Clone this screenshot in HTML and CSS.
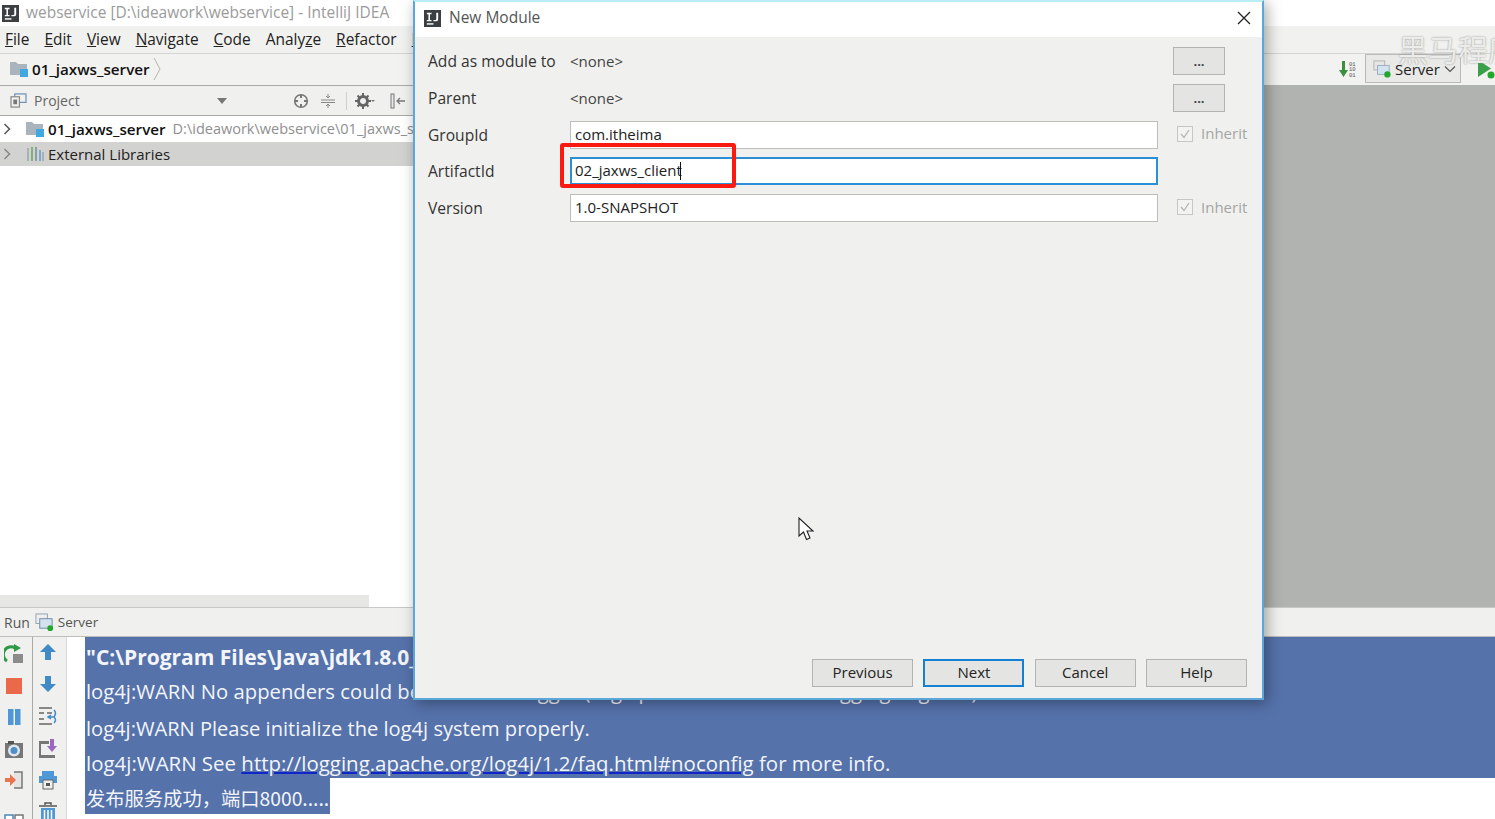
FILE: index.html
```html
<!DOCTYPE html>
<html lang="en">
<head>
<meta charset="utf-8">
<title>New Module</title>
<link rel="stylesheet" href="styles.css">
</head>
<body>
<div class="ide">
  <header class="titlebar">
    <svg class="ij-logo" viewBox="0 0 18 18"><rect width="18" height="18" fill="#3c3f41"/><rect x="3" y="14" width="7" height="1.5" fill="#fff"/><path d="M3 3h5v1.500H6.300v6H8V12H3v-1.500h1.700v-6H3zM13 3h2v7q0 2-2.500 2H10v-1.500h2q1 0 1-1z" fill="#fff"/></svg>
    <span class="title-text">webservice [D:\ideawork\webservice] - IntelliJ IDEA</span>
  </header>
  <nav class="menubar">
    <span><u>F</u>ile</span><span><u>E</u>dit</span><span><u>V</u>iew</span><span><u>N</u>avigate</span><span><u>C</u>ode</span><span>Analy<u>z</u>e</span><span><u>R</u>efactor</span><span><u>B</u>uild</span>
  </nav>
  <div class="navbar">
    <svg class="folder" viewBox="0 0 18 16"><path d="M0 1h6l2 2h9v11H0z" fill="#a9b4bd"/><rect x="10" y="8" width="8" height="8" fill="#40a8e0"/></svg>
    <span class="crumb">01_jaxws_server</span>
    <svg class="crumb-arrow" viewBox="0 0 8 24"><path d="M1 1l6 11-6 11" fill="none" stroke="#b5b5b5"/></svg>
    <div class="nav-right">
      <svg class="sort-icon" viewBox="0 0 20 18"><path d="M4 1h3v9h3l-4.500 7L1 10h3z" fill="#3c8f3f"/><text x="11" y="5.500" class="bits">01</text><text x="11" y="11" class="bits">10</text><text x="11" y="16.500" class="bits">01</text></svg>
      <div class="run-config">
        <svg class="server-icon" viewBox="0 0 20 20"><rect x="1" y="1" width="12" height="10" fill="#e6e6e6" stroke="#b0b0b0"/><rect x="5" y="6" width="13" height="10" fill="#d3e2f0" stroke="#9ab"/><circle cx="16" cy="16" r="3.500" fill="#1fa82c"/></svg>
        <span>Server</span>
        <svg class="chev" viewBox="0 0 12 8"><path d="M1 1.500l5 5 5-5" fill="none" stroke="#555" stroke-width="1.200"/></svg>
      </div>
      <svg class="run-icon" viewBox="0 0 18 20"><path d="M1 1l13 8.500L1 18z" fill="#3aa04a"/><circle cx="14" cy="16" r="3.500" fill="#1fa82c"/></svg>
    </div>
  </div>
  <main class="workspace">
    <aside class="project">
      <div class="project-head">
        <svg class="proj-icon" viewBox="0 0 18 16"><rect x="5" y="1" width="12" height="9" fill="none" stroke="#6d93b8" stroke-width="1.300"/><rect x="1" y="4" width="9" height="11" fill="#f0f0ef" stroke="#8a8a8a" stroke-width="1.300"/><rect x="3.500" y="7" width="4" height="5" fill="#777"/></svg>
        <span class="proj-label">Project</span>
        <span class="proj-drop"></span>
        <svg class="tool t-target" viewBox="0 0 16 16"><circle cx="8" cy="8" r="6.300" fill="none" stroke="#777" stroke-width="1.600"/><path d="M8 2v3M8 11v3M2 8h3M11 8h3" stroke="#777" stroke-width="2"/></svg>
        <svg class="tool t-collapse" viewBox="0 0 16 16"><path d="M1 7h14M1 9.500h14M8 1v4M6 3l2 2 2-2M8 15v-4M6 13l2-2 2 2" stroke="#888" fill="none"/></svg>
        <span class="tool-sep"></span>
        <svg class="tool t-gear" viewBox="0 0 20 16"><circle cx="8" cy="8" r="4.500" fill="none" stroke="#666" stroke-width="3"/><path d="M8 0v3M8 13v3M0 8h3M13 8h3M2.500 2.500l2 2M11.500 11.500l2 2M13.500 2.500l-2 2M4.500 11.500l-2 2" stroke="#666" stroke-width="2"/><path d="M16 7h4l-2 2z" fill="#777"/></svg>
        <svg class="tool t-hide" viewBox="0 0 16 16"><rect x="1" y="1" width="3" height="14" fill="#e8e8e8" stroke="#777"/><path d="M15 8H7M10 5L7 8l3 3" fill="none" stroke="#777" stroke-width="1.300"/></svg>
      </div>
      <div class="tree">
        <div class="tree-row first">
          <svg class="twist" viewBox="0 0 8 12"><path d="M1.500 1l5 5-5 5" fill="none" stroke="#555" stroke-width="1.500"/></svg>
          <svg class="folder tree-icon" viewBox="0 0 18 16"><path d="M0 1h6l2 2h9v11H0z" fill="#a9b4bd"/><rect x="10" y="8" width="8" height="8" fill="#40a8e0"/></svg>
          <span class="crumb">01_jaxws_server</span>
          <span class="path">D:\ideawork\webservice\01_jaxws_server</span>
        </div>
        <div class="tree-row selected">
          <svg class="twist" viewBox="0 0 8 12"><path d="M1.500 1l5 5-5 5" fill="none" stroke="#888" stroke-width="1.500"/></svg>
          <svg class="tree-icon" viewBox="0 0 18 16"><path d="M2 2v13" stroke="#9aa6ad" stroke-width="1.500"/><path d="M6 1v14" stroke="#62a85a" stroke-width="1.500"/><path d="M10 1v14" stroke="#7a8b99" stroke-width="1.500"/><path d="M14 4v11" stroke="#5d9ecf" stroke-width="1.500"/><path d="M17 6v9" stroke="#9aa6ad" stroke-width="1.500"/></svg>
          <span>External Libraries</span>
        </div>
      </div>
      <div class="hscroll"><span class="hthumb"></span></div>
    </aside>
    <section class="editor"></section>
  </main>
  <div class="runbar">
    <span class="run-label">Run</span>
    <svg class="runbar-icon" viewBox="0 0 20 20"><rect x="1" y="1" width="12" height="10" fill="#eee" stroke="#90a0ae"/><rect x="5" y="6" width="13" height="10" fill="#d3e2f0" stroke="#6f8ba5"/><circle cx="16" cy="16" r="3" fill="#1fa82c"/></svg>
    <span class="run-tab">Server</span>
  </div>
  <section class="console">
    <div class="tools tools-a">
      <svg viewBox="0 0 20 20"><path d="M3 17A7.500 7.500 0 0 1 11 4" fill="none" stroke="#2e9a48" stroke-width="3"/><path d="M10 0l7 4-7 4z" fill="#2e9a48"/><rect x="9" y="10" width="10" height="9" fill="#8c8c8c"/></svg>
      <svg viewBox="0 0 20 20"><rect x="2" y="2" width="16" height="16" fill="#e9694a"/></svg>
      <svg viewBox="0 0 20 20"><rect x="4" y="2" width="5.500" height="16" fill="#4f97d6"/><rect x="11" y="2" width="5.500" height="16" fill="#4f97d6"/></svg>
      <svg viewBox="0 0 20 20"><rect x="1" y="4" width="18" height="15" fill="#777"/><rect x="4" y="2" width="6" height="3" fill="#555"/><circle cx="10" cy="11.500" r="6" fill="#dfe8f0"/><circle cx="10" cy="11.500" r="3.500" fill="#4f8fc8"/></svg>
      <svg viewBox="0 0 20 20"><path d="M10 2h8v16h-8" fill="#e4e4e4" stroke="#777" stroke-width="1.500"/><path d="M1 8h5V4l6 6-6 6v-4H1z" fill="#ea7350"/></svg>
      <span class="tools-line"></span>
      <svg viewBox="0 0 20 20"><rect x="1" y="3" width="8" height="13" fill="#fff" stroke="#4e86b8" stroke-width="1.500"/><rect x="11" y="3" width="8" height="13" fill="#fff" stroke="#777" stroke-width="1.500"/></svg>
    </div>
    <div class="tools tools-b">
      <svg viewBox="0 0 20 20"><path d="M10 2l8 8h-5v8H7v-8H2z" fill="#3f8ac9"/></svg>
      <svg viewBox="0 0 20 20"><path d="M10 18l8-8h-5V2H7v8H2z" fill="#3f8ac9"/></svg>
      <svg viewBox="0 0 20 20"><path d="M1 2h13M1 18h13M1 7h5M9 7h5M1 13h5" stroke="#666" stroke-width="1.500" fill="none"/><path d="M16 4q3 3 0 7h-6M16 11q3 3 0 6M13 9l-3 2 3 2" stroke="#3f8ac9" stroke-width="1.500" fill="none"/></svg>
      <svg viewBox="0 0 20 20"><path d="M1 3h10v3h-8v11h14v3H1z" fill="#777"/><rect x="3" y="6" width="14" height="11" fill="#efefef"/><path d="M12 1h4v7h3l-5 6-5-6h3z" fill="#9a68c0"/></svg>
      <svg viewBox="0 0 20 20"><rect x="4" y="1" width="12" height="5" fill="#4f97d6"/><rect x="1" y="6" width="18" height="7" fill="#4f97d6"/><rect x="5" y="10" width="10" height="9" fill="#eee" stroke="#666"/><rect x="8" y="13" width="4" height="3" fill="#555"/></svg>
      <svg viewBox="0 0 20 20"><path d="M7 3V1h6v2M1 4h18" stroke="#555" stroke-width="1.500" fill="none"/><rect x="3" y="6" width="14" height="14" fill="#4f97d6"/><path d="M6.500 8v10M10 8v10M13.500 8v10" stroke="#fff" stroke-width="1.500"/></svg>
    </div>
    <div class="output">
      <div class="sel-block">
        <div class="line line-bold">"C:\Program Files\Java\jdk1.8.0_131\bin\java.exe" ...</div>
        <div class="line line-mid">log4j:WARN No appenders could be found for logger (org.apache.cxf.common.logging.LogUtils).</div>
        <div class="line">log4j:WARN Please initialize the log4j system properly.</div>
        <div class="line line-wide">log4j:WARN See <a class="link" href="#">http://logging.apache.org/log4j/1.2/faq.html#noconfig</a> for more info.</div>
      </div>
      <div class="line line-last">发布服务成功，端口8000.....</div>
    </div>
  </section>
</div>

<div class="watermark">黑马程序员</div>

<div class="dialog">
  <div class="dialog-title">
    <svg class="dialog-logo" viewBox="0 0 18 18"><rect width="18" height="18" fill="#3c3f41"/><rect x="3" y="14" width="7" height="1.500" fill="#fff"/><path d="M3 3h5v1.500H6.300v6H8V12H3v-1.500h1.700v-6H3zM13 3h2v7q0 2-2.500 2H10v-1.500h2q1 0 1-1z" fill="#fff"/></svg>
    <span class="dialog-name">New Module</span>
    <svg class="close" viewBox="0 0 14 14"><path d="M1 1l12 12M13 1L1 13" stroke="#222" stroke-width="1.300"/></svg>
  </div>
  <div class="dialog-body">
    <form class="form">
      <label>Add as module to</label><span class="value">&lt;none&gt;</span><button type="button" class="dots">...</button>
      <label>Parent</label><span class="value">&lt;none&gt;</span><button type="button" class="dots">...</button>
      <label>GroupId</label><div class="field">com.itheima</div><div class="inherit"><span class="check"><svg viewBox="0 0 12 12"><path d="M2 6l3 3.500L10 2" fill="none" stroke="#b5b5b5" stroke-width="1.300"/></svg></span><span class="inherit-text">Inherit</span></div>
      <label>ArtifactId</label><div class="field focus">02_jaxws_client<span class="caret"></span></div><span></span>
      <label>Version</label><div class="field">1.0-SNAPSHOT</div><div class="inherit"><span class="check"><svg viewBox="0 0 12 12"><path d="M2 6l3 3.500L10 2" fill="none" stroke="#b5b5b5" stroke-width="1.300"/></svg></span><span class="inherit-text">Inherit</span></div>
    </form>
    <div class="footer">
      <button type="button" class="btn">Previous</button>
      <button type="button" class="btn primary">Next</button>
      <button type="button" class="btn">Cancel</button>
      <button type="button" class="btn">Help</button>
    </div>
  </div>
</div>

<div class="annotation"></div>
<svg class="pointer" viewBox="0 0 17 25"><path d="M1 1v18l4.500-4 3 7.500 3.500-1.500-3-7h6z" fill="#fff" stroke="#222" stroke-width="1.100"/></svg>
</body>
</html>
```
FILE: styles.css
```css
* { box-sizing: border-box; }
html, body { margin: 0; height: 100%; overflow: hidden; }
body { position: relative; width: 1495px; height: 819px; font-family: "Open Sans", "Noto Sans", "Noto Sans CJK SC", sans-serif; font-size: 15px; color: #2b2b2b; background: #fff; }
svg { display: block; flex: none; }

.ide { display: flex; flex-direction: column; width: 1495px; height: 819px; overflow: hidden; }

.titlebar { flex: 0 0 26px; display: flex; align-items: center; gap: 7px; padding: 0 0 2px 2px; background: #fff; white-space: nowrap; }
.ij-logo { width: 17px; height: 17px; margin-top: 2px; }
.title-text { color: #9b9b9b; font-size: 15.5px; }

.menubar { flex: 0 0 27px; display: flex; align-items: center; gap: 15px; padding: 0 0 1px 5px; background: #f1f1ef; white-space: nowrap; font-size: 15.450px; color: #222; }

.navbar { flex: 0 0 32px; display: flex; align-items: center; padding: 0 0 2px 10px; background: #f2f2f0; border-top: 1px solid #d4d4d2; }
.folder { width: 18px; height: 16px; }
.crumb { font-weight: 600; color: #111; font-size: 15.2px; white-space: nowrap; margin-left: 4px; }
.crumb-arrow { width: 8px; height: 24px; margin-left: 3px; }
.nav-right { margin-left: auto; display: flex; align-items: center; }
.sort-icon { width: 20px; height: 18px; margin-right: 7px; }
.bits { font-family: "Liberation Mono", monospace; font-size: 5.500px; fill: #555; }
.run-config { width: 96px; height: 29px; display: flex; align-items: center; gap: 4px; padding-left: 7px; border: 1px solid #b9b9b7; background: #e9e9e7; color: #222; }
.server-icon { width: 18px; height: 18px; }
.chev { width: 12px; height: 8px; }
.run-icon { width: 18px; height: 20px; margin-left: 16px; }

.workspace { flex: 1; min-height: 0; display: flex; }
.project { flex: 0 0 420px; display: flex; flex-direction: column; background: #fff; }
.project-head { flex: 0 0 31px; display: flex; align-items: center; padding-left: 10px; background: #f0f0ee; border-top: 1px solid #a9a9a7; border-bottom: 1px solid #a9a9a7; }
.proj-icon { width: 17px; height: 15px; }
.proj-label { color: #666; font-size: 14px; margin-left: 7px; width: 183px; }
.proj-drop { width: 0; height: 0; border-left: 5px solid transparent; border-right: 5px solid transparent; border-top: 6px solid #777; margin-right: 66px; }
.tool { height: 16px; }
.t-target { width: 16px; }
.t-collapse { width: 16px; margin-left: 11px; }
.tool-sep { width: 1px; height: 18px; background: #cfcfcd; margin: 0 6px 0 10px; }
.t-gear { width: 24px; }
.t-hide { width: 16px; margin-left: 13px; }

.tree { flex: 1; padding-top: 1px; background: #fff; }
.tree-row { height: 25px; display: flex; align-items: center; white-space: nowrap; overflow: hidden; padding-left: 3px; }
.tree-row.first { padding-bottom: 2px; }
.tree-row.selected { background: #d2d2d0; color: #222; height: 24px; font-size: 15px; }
.twist { width: 8px; height: 12px; }
.tree-icon { width: 18px; height: 16px; margin-left: 15px; }
.tree-row .crumb { margin-left: 4px; }
.tree-row.selected span { margin-left: 4px; }
.path { color: #8f8f8f; margin-left: 7px; font-size: 14.500px; }
.hscroll { flex: 0 0 12px; background: #fff; }
.hthumb { display: block; width: 369px; height: 12px; background: #e7e7e5; }
.editor { flex: 1; background: #b1b3b1; }

.runbar { flex: 0 0 30px; display: flex; align-items: center; padding-left: 4px; background: #f0f0ee; border-top: 1px solid #c8c8c6; border-bottom: 1px solid #bdbdbb; font-size: 14px; color: #555; }
.runbar-icon { width: 19px; height: 19px; margin-left: 5px; }
.run-tab { margin-left: 4px; font-size: 13.500px; }

.console { flex: 0 0 182px; display: flex; overflow: hidden; background: #fff; }
.tools { display: flex; flex-direction: column; align-items: center; background: #f0f0ee; }
.tools svg { width: 20px; height: 20px; }
.tools-a { width: 33px; gap: 11.500px; padding: 7px 4px 0 0; border-right: 1px solid #a9a9a7; }
.tools-b { width: 34px; gap: 12px; padding: 5px 4px 0 0; border-right: 1px solid #d8d8d6; }
.tools-line { width: 27px; height: 1px; background: #c8c8c6; margin: -1px 0 0; }

.output { flex: 1; padding-left: 18px; min-width: 0; }
.sel-block { background: #5572ab; }
.line { height: 35.250px; padding: 3px 0 0 1px; line-height: 35px; font-size: 20.100px; color: #f3f5fa; white-space: nowrap; overflow: hidden; }
.line-bold { font-weight: 700; font-size: 21px; }
.line-mid { font-size: 20.250px; padding-top: 2px; }
.line-wide { font-size: 20.450px; }
.line-last { display: inline-block; height: 36px; padding-right: 1px; background: #5572ab; font-size: 19.300px; font-family: "Noto Sans CJK SC", "Open Sans", sans-serif; }
.link { color: #f3f5fa; text-decoration-color: #1026c8; text-decoration-thickness: 2px; }

.watermark { position: absolute; left: 1398px; top: 29px; font-family: "Noto Sans CJK SC", sans-serif; font-size: 30px; line-height: 38px; white-space: nowrap; color: #ececea; text-shadow: 0 0 2px #8f8f8d; }

.dialog { position: absolute; left: 413px; top: 0; width: 851px; height: 700px; display: flex; flex-direction: column; border: 2px solid #5aa7d8; border-top-color: #b9ecf5; background: #f0f1ee; box-shadow: 3px 3px 14px rgba(0,0,0,.35); }
.dialog-title { flex: 0 0 35px; display: flex; align-items: center; padding: 0 11px 6px 9px; background: #fff; color: #555; font-size: 15.500px; }
.dialog-logo { width: 17px; height: 17px; margin: 3px 8px 0 0; }
.close { width: 14px; height: 14px; margin: 3px 0 0 auto; }
.dialog-body { flex: 1; display: flex; flex-direction: column; padding: 10px 15px 11px 13px; }

.form { display: grid; grid-template-columns: 142px 588px 1fr; grid-auto-rows: 28px; row-gap: 8.750px; align-items: center; font-size: 15.600px; color: #333; }
.form label { white-space: nowrap; }
.value { color: #444; font-size: 15px; }
.dots { justify-self: start; width: 52px; height: 28px; margin-left: 15px; padding: 0; border: 1px solid #b3b3b1; background: #e4e5e3; font: 700 13px "Open Sans", sans-serif; color: #444; }
.field { height: 28px; line-height: 24px; font-size: 15px; padding-left: 4px; border: 1px solid #bdbdbb; background: #fff; color: #222; white-space: nowrap; }
.field.focus { border: 2px solid #2a8fd6; line-height: 23px; padding-left: 3px; }
.caret { display: inline-block; width: 1px; height: 18px; margin-left: -2px; background: #111; vertical-align: -4px; }
.inherit { display: flex; align-items: center; margin-left: 19px; color: #a5a5a5; font-size: 15px; }
.inherit-text { padding-bottom: 3px; }
.check { width: 16px; height: 16px; margin: 0 8px 2px 0; padding: 1px; border: 1px solid #c6c6c4; background: #f3f3f1; }

.footer { margin-top: auto; display: flex; justify-content: flex-end; gap: 10.300px; }
.btn { width: 101px; height: 28px; padding: 0 0 2px; border: 1px solid #b3b3b1; background: #e4e5e3; font: 15px "Open Sans", sans-serif; color: #222; }
.btn.primary { border: 2px solid #1380d4; }

.annotation { position: absolute; left: 560px; top: 143px; width: 176px; height: 45px; border: 4px solid #fb1a0f; border-radius: 3px; }
.pointer { position: absolute; left: 798px; top: 517px; width: 17px; height: 25px; }
```
